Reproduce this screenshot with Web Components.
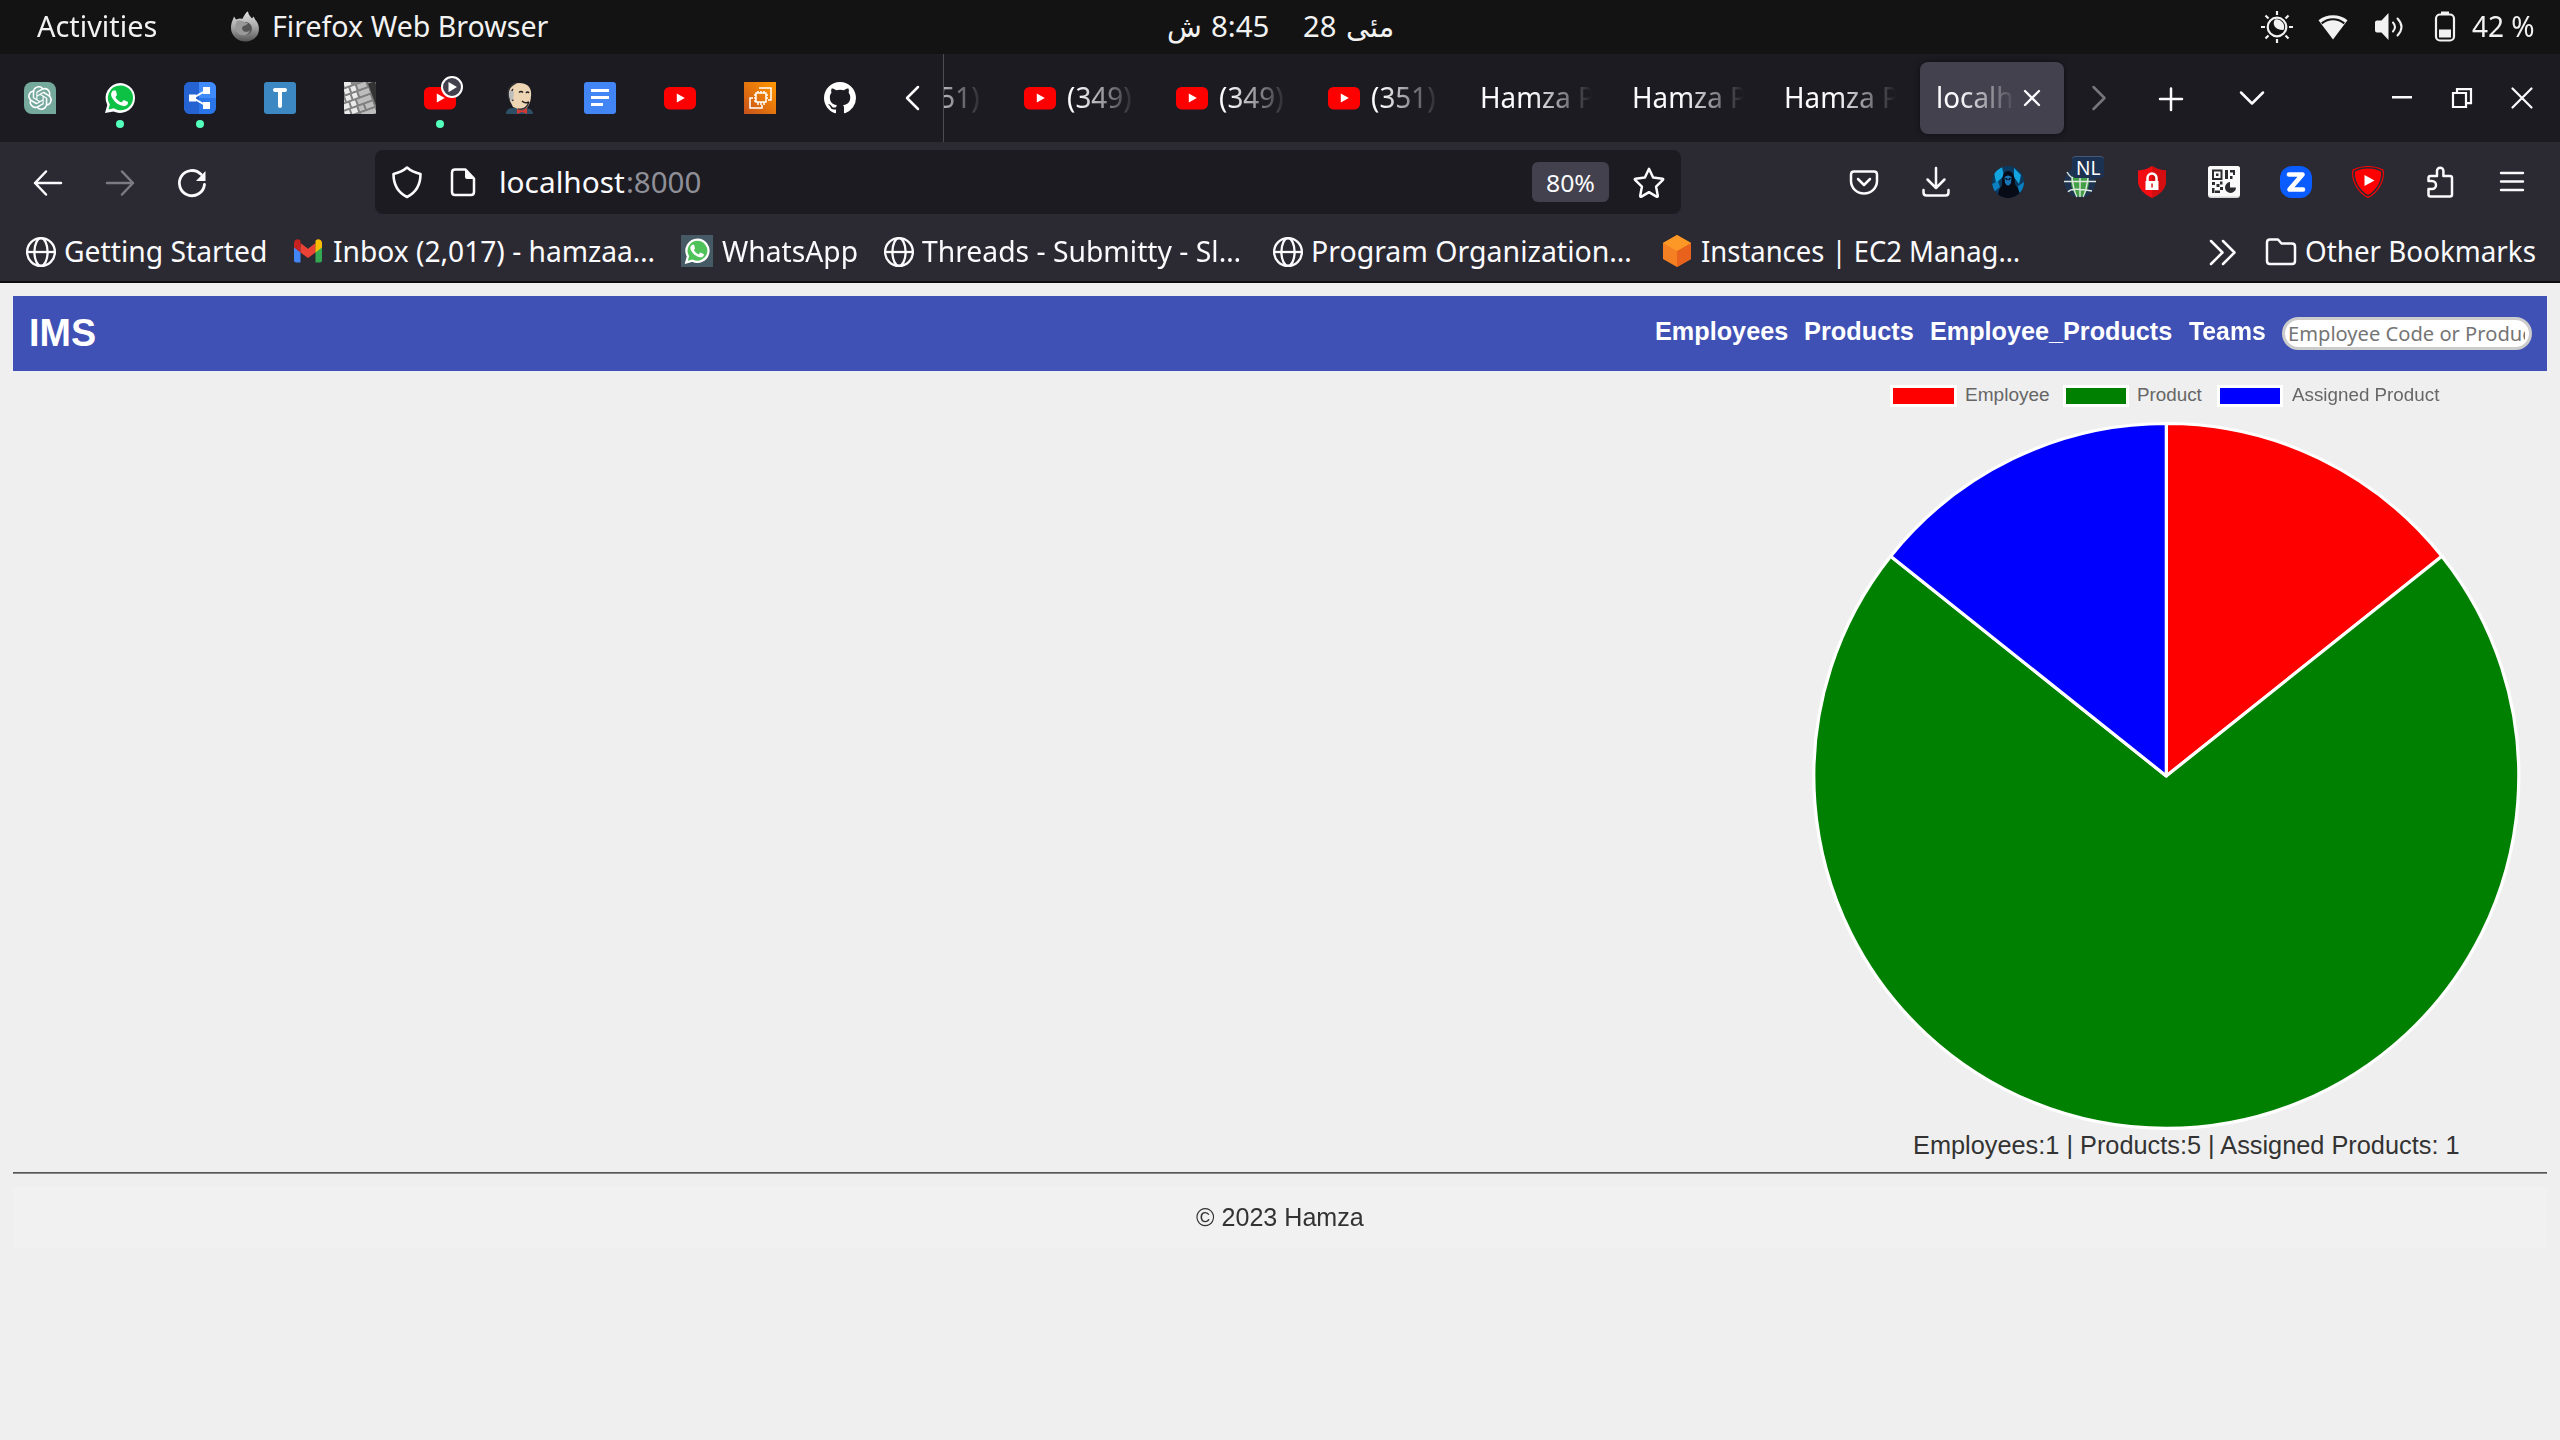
<!DOCTYPE html>
<html lang="en">
<head>
<meta charset="utf-8">
<title>IMS</title>
<style>
html,body{margin:0;height:100%;background:#efefef;overflow:hidden}
</style>
</head>
<body>
<desktop-screen></desktop-screen>
<script>
const globe='<g fill="none" stroke="#fbfbfe" stroke-width="2.3"><circle cx="16" cy="17" r="13.9"/><ellipse cx="16" cy="17" rx="6.6" ry="13.9"/><path d="M2 17h28"/></g>';
const yt='<rect y="5" width="32" height="22.4" rx="5.5" fill="#f00"/><path d="M12.8 11.6v9l8-4.5z" fill="#fff"/>';
const wa='M16.4 2A13.9 13.9 0 0 0 4.3 22.8L2.2 30.4l7.8-2A13.9 13.9 0 1 0 16.4 2z';
const phone='M11.3 8.3c-.4-.8-.8-.8-1.2-.8h-.9c-.4 0-1 .1-1.4.6-.5.5-1.5 1.5-1.5 3.400 0 2 1.500 4 1.700 4.300.2.3 2.900 4.600 7.100 6.300 3.500 1.300 4.200 1 5 1 .8-.1 2.400-1 2.800-2 .3-1 .3-1.800.2-2-.1-.1-.400-.3-.9-.500s-2.400-1.200-2.800-1.300c-.4-.200-.7-.200-1 .200l-1.200 1.600c-.2.3-.500.300-.9.1-.400-.2-1.700-.6-3.200-2-1.200-1.100-2-2.400-2.200-2.800-.2-.4 0-.7.2-.900l.900-1.200c.2-.2.1-.500 0-.700z';
const ln=(d,w=2.5,c='#fbfbfe')=>`<path d="${d}" fill="none" stroke="${c}" stroke-width="${w}" stroke-linecap="round" stroke-linejoin="round"/>`;
const ICONS={
firefox:`<defs><linearGradient id="a" x2="0" y2="1"><stop stop-color="#e2e2e2"/><stop offset=".5" stop-color="#aaa"/><stop offset="1" stop-color="#555"/></linearGradient></defs><path d="M3.500 9.500 5 5.600l2 3 3.500-1 3 .200C15 5 16.500 1.500 19 .3c.3 3.200 2 5 4 7.200l1.500-2 2 3.500c3 3.500 3.900 7 3.200 11.500C28.500 26.500 23 30.500 16.500 30.500 8.500 30.500 2 24.500 2 17c0-3 .5-5.500 1.500-7.500z" fill="url(#a)"/><circle cx="16.500" cy="17.500" r="6.500" fill="#555"/><path d="M8 10c3-1 6 0 8 1.500l3 .5c-1 2-3 2-4.500 3-2 1-2 3.500 0 5s5 1 6.500-1c-1 5-6 6.500-10 4.500-5-2.500-6-8-3-13.500z" fill="#999"/>`,
sun:`<g fill="none" stroke="#f2f2f2" stroke-width="2.200"><circle cx="16" cy="16" r="9.300"/><path d="M16 0v4M16 28v4M0 16h4M28 16h4M4.500 4.500l3 3M24.500 24.500l3 3M4.500 27.500l3-3M24.500 7.500l3-3"/></g><path d="M14 8.500c-3 4-1 10.500 8.500 10.500a7.600 7.600 0 0 0-8.500-10.500z" fill="#f2f2f2"/>`,
wifi:`<path d="M1.500 9.300C9.500 2.600 22.500 2.600 30.500 9.300L16 28.500z" fill="#f2f2f2"/><path d="M4.700 12.400C11.500 7 20.500 7 27.300 12.400" fill="none" stroke="#131313" stroke-width="2"/>`,
speaker:`<path d="M2 11.500q0-2 2-2h4.500L15.500 2v27L8.500 21.500H4q-2 0-2-2z" fill="#f2f2f2"/>${ln('M20 11.500q4 4.500 0 9M24.500 7.500q8 8.500 0 17',2,'#f2f2f2')}`,
battery:`<rect x="7" y="3.500" width="18" height="26" rx="4" fill="none" stroke="#f2f2f2" stroke-width="2.200"/><path d="M12 .500h8v2.500h-8zM10 18.500h12v8H10z" fill="#f2f2f2"/>`,
gpt:`<path d="M8 0h16a8 8 0 0 1 8 8v24H8a8 8 0 0 1-8-8V8a8 8 0 0 1 8-8z" fill="#75a99c"/><g transform="translate(4 4)" fill="#fff"><path d="M22.2819 9.8211a5.9847 5.9847 0 0 0-.5157-4.9108 6.0462 6.0462 0 0 0-6.5098-2.9A6.0651 6.0651 0 0 0 4.9807 4.1818a5.9847 5.9847 0 0 0-3.9977 2.9 6.0462 6.0462 0 0 0 .7427 7.0966 5.98 5.98 0 0 0 .511 4.9107 6.051 6.051 0 0 0 6.5146 2.9001A5.9847 5.9847 0 0 0 13.2599 24a6.0557 6.0557 0 0 0 5.7718-4.2058 5.9894 5.9894 0 0 0 3.9977-2.9001 6.0557 6.0557 0 0 0-.7475-7.073zm-9.022 12.6081a4.4755 4.4755 0 0 1-2.8764-1.0408l.1419-.0804 4.7783-2.7582a.7948.7948 0 0 0 .3927-.6813v-6.7369l2.02 1.1686a.071.071 0 0 1 .038.052v5.5826a4.504 4.504 0 0 1-4.4945 4.4944zm-9.6607-4.1254a4.4708 4.4708 0 0 1-.5346-3.0137l.142.0852 4.783 2.7582a.7712.7712 0 0 0 .7806 0l5.8428-3.3685v2.3324a.0804.0804 0 0 1-.0332.0615L9.74 19.9502a4.4992 4.4992 0 0 1-6.1408-1.6464zM2.3408 7.8956a4.485 4.485 0 0 1 2.3655-1.9728V11.6a.7664.7664 0 0 0 .3879.6765l5.8144 3.3543-2.0201 1.1685a.0757.0757 0 0 1-.071 0l-4.8303-2.7865A4.504 4.504 0 0 1 2.3408 7.872zm16.5963 3.8558L13.1038 8.364 15.1192 7.2a.0757.0757 0 0 1 .071 0l4.8303 2.7913a4.4944 4.4944 0 0 1-.6765 8.1042v-5.6772a.79.79 0 0 0-.407-.667zm2.0107-3.0231l-.142-.0852-4.7735-2.7818a.7759.7759 0 0 0-.7854 0L9.409 9.2297V6.8974a.0662.0662 0 0 1 .0284-.0615l4.8303-2.7866a4.4992 4.4992 0 0 1 6.6802 4.66zM8.3065 12.863l-2.02-1.1638a.0804.0804 0 0 1-.038-.0567V6.0742a4.4992 4.4992 0 0 1 7.3757-3.4537l-.142.0805L8.704 5.459a.7948.7948 0 0 0-.3927.6813zm1.0976-2.3654l2.602-1.4998 2.6069 1.4998v2.9994l-2.5974 1.4997-2.6067-1.4997Z"/></g>`,
wa:`<path d="M16.400 1A15 15 0 0 0 3.300 23L1 31l8.500-1.500A15 15 0 1 0 16.400 1z" fill="#fff"/><path d="M16.300 3.500A12.400 12.400 0 0 0 5.800 22.500L4.500 27.500l5.300-1.300A12.400 12.400 0 1 0 16.300 3.500z" fill="#0cc143"/><path d="${phone}" transform="translate(.8 1)" fill="#fff"/>`,
waold:`<rect width="32" height="32" fill="#455a64"/><g transform="translate(3.500 3) scale(.8)"><path d="${wa}" fill="#4fc35a" stroke="#fff" stroke-width="2.800"/><path d="${phone}" transform="translate(1 1)" fill="#fff"/></g>`,
share:`<rect width="32" height="32" rx="6" fill="#2a75e8"/><path d="M6 0h9v32H6a6 6 0 0 1-6-6V6a6 6 0 0 1 6-6z" fill="#2563d2"/><path d="M15 0h11a6 6 0 0 1 6 6v10H15z" fill="#3f8bfc"/><path d="M22 8.500 9 16l13 7.500" stroke="#fff" stroke-width="2" fill="none"/><path d="M5 12.500h7v7H5zM19 5h7v7h-7zM19 20h7v7h-7z" fill="#fff"/>`,
tlogo:`<rect width="32" height="32" rx="3" fill="#3b88c3"/>${ln('M11 8h10M16 8v16',4,'#fff')}`,
keys:`<clipPath id="k"><path d="M0 0h32v32H0z"/></clipPath><g clip-path="url(#k)"><path d="M0 0h32v32H0z" fill="#8c8c8c"/><g transform="rotate(-20 16 16)" stroke="#777" stroke-width=".8" fill="#ebebeb"><path d="M-4-5h8v6h-8zM5-5h8v6H5zM-4 2h6v6h-6zM3 2h6v6H3zM10 2h6v6h-6zM-4 9h5v6h-5zM2 9h6v6H2zM9 9h6v6H9zM-4 16h8v6h-8zM5 16h6v6H5zM-4 23h6v6h-6zM3 23h7v6H3zM-2 30h12v6H-2z"/><path fill="#bdbdbd" d="M17 2h10v6H17zM16 9h12v6H16zM12 16h15v6H12zM11 23h6v6h-6zM18 23h9v6h-9zM11 30h16v6H11z"/><path d="M28-6h8v44h-8z" fill="#333"/><path d="M29-1h7v6h-7z"/></g></g>`,
yt,
ytplay:yt+`<circle cx="28" cy="5" r="10" fill="#42414d" stroke="#fff" stroke-width="2"/><path d="M24.500 0v10.200l8.500-5.100z" fill="#fff"/>`,
jenkins:`<path d="M2 32c0-4 2-6 8-6l8-1 8 2c2 1 3 3 3 5z" fill="#2d5066"/><path d="M9 25l-4-8C3 8 7 1 15 1c9 0 13 5 12 13-.300 6-2 9-4 12l-6 2z" fill="#eed5b4"/><path d="M6 18C2 10 5 4 12 1M9 7c-3 3-2 7 0 12M14 27c5 1 9-1 11-7" fill="none" stroke="#333" stroke-width="1.500"/><path d="M6 8c-2 4-1 8 1 12l2-3 1-7z" fill="#bdbdbd"/><path d="M15 10.500q2-2 4 0M22 11q1.500-2 3 0M18 19q3 3 7 1" fill="none" stroke="#222" stroke-width="1.500"/><path d="M13 27l5 1.500 5-2.500v6l-5-2-5 2z" fill="#d33833"/>`,
docs:`<rect width="32" height="32" rx="3" fill="#4285f4"/><path d="M7 7h18v3H7zM7 14h18v3H7zM7 21h12v3H7z" fill="#fff"/>`,
ec2:`<defs><linearGradient id="e" x1="0" y1="1" x2="1" y2="0"><stop stop-color="#c8511b"/><stop offset="1" stop-color="#f90"/></linearGradient></defs><path fill="url(#e)" d="M0 0h32v32H0z"/><g fill="none" stroke="#fff" stroke-width="1.500"><rect x="12" y="11" width="10" height="9"/><path d="M15 6h12v12h-3M9 16H6v10h12v-3M14 9v2M17 9v2M20 9v2M14 20v3M17 20v3M20 20v3M10 13h2M10 16h2M10 19h2M22 13h2M22 16h2"/></g>`,
github:`<path transform="scale(2)" fill="#fff" d="M8 0C3.58 0 0 3.58 0 8c0 3.54 2.29 6.53 5.47 7.59.4.07.55-.17.55-.38 0-.19-.01-.82-.01-1.49-2.01.37-2.53-.49-2.69-.94-.09-.23-.48-.94-.82-1.13-.28-.15-.68-.52-.01-.53.63-.01 1.08.58 1.23.82.72 1.21 1.87.87 2.33.66.07-.52.28-.87.51-1.07-1.78-.2-3.64-.89-3.64-3.95 0-.87.31-1.59.82-2.15-.08-.2-.36-1.02.08-2.12 0 0 .67-.21 2.2.82.64-.18 1.32-.27 2-.27s1.36.09 2 .27c1.53-1.04 2.2-.82 2.2-.82.44 1.1.16 1.92.08 2.12.51.56.82 1.27.82 2.15 0 3.07-1.87 3.75-3.65 3.95.29.25.54.73.54 1.48 0 1.07-.01 1.93-.01 2.2 0 .21.15.46.55.38A8.01 8.01 0 0 0 16 8c0-4.42-3.58-8-8-8Z"/>`,
prev:ln('M22 5 11 16l11 11'),
next:ln('M10.500 5l11 11-11 11',2.5,'#75757b'),
plus:ln('M16 6.500v21.500M5 17h22'),
down:ln('M5 10.500l11 11 11-11'),
min:'<path d="M6 14h20v2.500H6z" fill="#fbfbfe"/>',
restore:'<g fill="none" stroke="#fbfbfe" stroke-width="2.200"><path d="M7 11h13v14H7z"/><path d="M11 11V7.200h14v14h-5"/></g>',
close:ln('M6.500 6.500l19 19M25.500 6.500l-19 19',2.200),
x:ln('M1 1l14 14M15 1 1 15',2.300),
back:ln('M29 17H3M14 5.500 3 17l11 11.500'),
fwd:ln('M3 17h26M18 5.500 29 17 18 28.500',2.5,'#7c7b82'),
reload:`${ln('M28.500 18.500A12.600 12.600 0 1 1 25 8.300',2.800)}<path d="M29.500 5v9.500q0 .5-.5.500h-9z" fill="#fbfbfe"/>`,
shield:ln('M16 1.500q-5 4.500-13.500 6.500c0 10 3.500 18 13.500 23 10-5 13.500-13 13.500-23Q21 6 16 1.500z',2.600),
page:`${ln('M8 3.500h10.500l8.500 9V26q0 3-3 3H8q-3 0-3-3V6.500q0-3 3-3z',2.500)}<path d="M18 3v8q0 2 2 2h8z" fill="#fbfbfe"/>`,
star:ln('M16 2.800l4.100 8.700 9.300 1.200q1.500.4.300 1.500l-6.600 6.500 1.700 9q0 1.500-1.300.9L16 26.200l-7.500 4.400q-1.300.6-1.300-.9l1.700-9-6.600-6.500q-1.200-1.100.3-1.500l9.300-1.200z',2.500),
pocket:ln('M6 5.500h20q3 0 3 3V15a13 12.500 0 0 1-26 0V8.500q0-3 3-3zM10 13l6 6 6-6',2.500),
dl:ln('M16 2v19M7.500 13.500 16 22l8.500-8.500M3.500 24v2.500q0 3 3 3h19q3 0 3-3V24',2.500),
avatar:`<clipPath id="v"><circle cx="16" cy="16" r="16"/></clipPath><g clip-path="url(#v)"><path d="M0 0h32v32H0z" fill="#0b3a5e"/><path d="M2 6l8-5 2 9-8 7zM22 2l7 7-2 9-5-7z" fill="#12a5e0"/><path d="M0 18l6-3 2 6-6 5zM26 20l6-4v8l-5 3z" fill="#0b7fc0"/><path d="M6 32c0-8 2-9 4-13 0-8 1-14 6-14s7 6 7 13c2 4 5 6 5 14z" fill="#070b16"/><path d="M12.500 11q3.500-3 7 0l-.500 6q-3 5-6 0z" fill="#1876b8"/><path d="M13.500 12l2 2M18.500 12l-2 2" stroke="#061020" stroke-width="1.500"/></g>`,
vpn:`<circle cx="16" cy="16" r="15.500" fill="#1e3350"/><path d="M16 6c6 0 9 4 9 10s-4 15-9 15-9-9-9-15 3-10 9-10z" fill="#43a047"/><path d="M16 2v29M0 15.500h32M3 6q3 5 6 6M4 26q3-5 24-1M8 12q2 14 5 19M24 12q-2 14-5 19" fill="none" stroke="#dfe8e0" stroke-width="1.400"/>`,
lock:`<path d="M16 0q6 4 14 4.500v12Q29 26 16 32 3 26 2 16.500v-12Q10 4 16 0z" fill="#f30d12"/><path d="M16 0q6 4 14 4.500v12Q29 26 16 32z" fill="#d30d10"/><path d="M9.500 15h13v9h-13z" fill="#fff"/><path d="M11.500 16v-4a4.500 4.500 0 0 1 9 0v4" fill="none" stroke="#fff" stroke-width="2.500"/><path d="M15.200 17.500h1.700v4h-1.700z" fill="#d33"/>`,
qr:`<rect width="32" height="32" rx="3" fill="#d5d5d5"/><rect width="32" height="30.500" rx="3" fill="#fafafa"/><g fill="#2b2a2e"><path d="M4 3.500h10.500v10.500H4zM6 5.500v6.500h6.500V5.500z" fill-rule="evenodd"/><path d="M8 7.500h2.500v2.500H8zM17 4h3v9h-3zM22 4h5v5h-2V6.500h-3zM22 10h2.500v3H22zM4 16h3v3H4zM8.500 18h3v3h-3zM12 15.500h2.500v3H12zM4 22h2.500v5H4zM7 24.500h5V27H7zM12 21h3v3h-3z"/><path d="M22 16v5.500h6a5.500 5.500 0 1 1-6-5.500z"/></g>`,
zoom:`<rect width="32" height="32" rx="12" fill="#0b5cff"/>${ln('M9 8.500h13.500L9.500 23.500H23',4.600,'#fff')}`,
ytshield:`<path d="M16 .500C21 .500 27 2 31 4c2 9-4 22-15 27.500C5 26-1 13 1 4 5 2 11 .500 16 .500z" fill="none" stroke="#f00" stroke-width="1.200"/><path d="M16 2.500c5 0 9 1 13 3 1 8-4 18.500-13 23.500C7 24 2 13.500 3 5.500c4-2 8-3 13-3z" fill="#f00"/><path d="M12.500 9v11l10-5.500z" fill="#fff"/>`,
ext:ln('M6.500 30.500q-2 0-2-2V23h3.500a4 4 0 0 0 0-8H4.500v-3q0-2 2-2H13V5a3.200 3.200 0 0 1 6.400 0v5H26q2 0 2 2v16.500q0 2-2 2z',2.500),
menu:ln('M5 7h22M5 15.500h22M5 24h22',2.400),
globe,
gmail:`<path d="M2 9v16q0 2.500 2.500 2.500H8.500V12z" fill="#4285f4"/><path d="M30 9v16q0 2.500-2.500 2.500H23.500V12z" fill="#34a853"/><path d="M8.500 8v9.500L16 23l7.500-5.500V8L16 13.700z" fill="#ea4335"/><path d="M2 9.500V8c0-3 3.500-5 6-3l.5 1v11.500L2 12.500z" fill="#c5221f"/><path d="M30 9.500V8c0-3-3.500-5-6-3l-.5 1v11.500l6.500-5z" fill="#fbbc04"/>`,
cube:`<path d="M16 0l14 8v16l-14 8-14-8V8z" fill="#f58024"/><path d="M16 15.500 30 8v16l-14 8z" fill="#e8621d"/><path d="M16 0l14 8-14 8L2 8z" fill="#fd9827"/>`,
more:ln('M4 5l11.500 11.500L4 28M16 5l11.500 11.500L16 28',2.5),
folder:ln('M5 4.500h8l3.500 4H27q3 0 3 3V26q0 3-3 3H5q-3 0-3-3V7.500q0-3 3-3z',2.500)
};

function define(name,css,html,after){
  const t=document.createElement('template');
  t.innerHTML=`<style>:host{box-sizing:border-box}*{box-sizing:border-box}${css}</style>${html}`;
  customElements.define(name,class extends HTMLElement{
    connectedCallback(){
      if(this.shadowRoot)return;
      this.attachShadow({mode:'open'}).appendChild(t.content.cloneNode(true));
      if(after)after(this,this.shadowRoot);
    }
  });
}

define('ui-icon',':host{display:block;width:32px;height:32px;flex:none}:host([size="16"]){width:16px;height:16px}svg{display:block;overflow:visible}','<div></div>',(el,root)=>{
  const s=el.getAttribute('size')||32;
  root.querySelector('div').innerHTML=`<svg width="${s}" height="${s}" viewBox="0 0 ${s} ${s}">${ICONS[el.getAttribute('name')]}</svg>`;
});

/* Text whose inked extent fills exactly the width given in the w attribute. */
const pen=document.createElement('canvas').getContext('2d');
define('fit-text',':host{display:block;flex:none;white-space:pre;line-height:1.3}span{display:inline-block;transform-origin:0 50%}','<span><slot></slot></span>',(el,root)=>{
  const w=+el.getAttribute('w'),cs=getComputedStyle(el),s=root.querySelector('span');
  pen.font=`${cs.fontWeight} ${cs.fontSize} ${cs.fontFamily}`;
  const m=pen.measureText(el.textContent),l=-m.actualBoundingBoxLeft,k=w/(m.actualBoundingBoxRight+m.actualBoundingBoxLeft);
  el.style.width=w+'px';
  s.style.transform=`translateX(${(l*-k).toFixed(2)}px) scaleX(${k.toFixed(4)})`;
  if(el.hasAttribute('rtl'))s.dir='rtl';
});

define('top-bar',`:host{display:grid;grid-template-columns:1fr auto 1fr;align-items:center;height:54px;background:#131313;color:#f2f2f2}
div{display:flex;align-items:center}.l{padding-left:36.500px}.r{justify-content:flex-end;padding-right:26px;gap:24px}.r fit-text{margin-left:-13px}`,
`<div class="l"><fit-text w="119.600">Activities</fit-text><ui-icon name="firefox" style="margin:0 13px 0 73px"></ui-icon><fit-text w="274.600">Firefox Web Browser</fit-text></div>
<div><fit-text w="32" rtl>ش</fit-text><fit-text w="56" style="margin-left:12px">8:45</fit-text><fit-text w="31" style="margin-left:36px">28</fit-text><fit-text w="45" rtl style="margin-left:12px">مئی</fit-text></div>
<div class="r"><ui-icon name="sun"></ui-icon><ui-icon name="wifi"></ui-icon><ui-icon name="speaker"></ui-icon><ui-icon name="battery"></ui-icon><fit-text w="62">42 %</fit-text></div>`);

define('pinned-tab',':host{display:flex;flex:none;width:80px;height:88px;align-items:center;justify-content:center;position:relative}i{position:absolute;left:36px;top:66px;width:8px;height:8px;border-radius:50%;background:#54ffbd;display:none}:host([dot]) i{display:block}','<slot></slot><i></i>');
define('browser-tab',`:host{display:flex;flex:none;width:152px;height:88px;align-items:center;padding:0 4px}
.b{display:flex;align-items:center;width:144px;height:72px;padding:0 16px;border-radius:8px}
:host([active]) .b{background:#42414d;box-shadow:0 0 5px #0008}
.t{flex:1;min-width:0;overflow:hidden;-webkit-mask-image:linear-gradient(to left,transparent,#000 58px);mask-image:linear-gradient(to left,transparent,#000 58px)}
:host([active]) .t{-webkit-mask-image:linear-gradient(to left,transparent 4px,#000 60px);mask-image:linear-gradient(to left,transparent 4px,#000 60px)}
::slotted(ui-icon[name=yt]){margin-right:12px}::slotted(ui-icon[name=x]){margin-left:4px;margin-right:8px}`,
'<div class="b"><slot name="icon"></slot><div class="t"><slot></slot></div><slot name="end"></slot></div>');

const yTab=n=>`<browser-tab><ui-icon slot="icon" name="yt"></ui-icon><fit-text w="63">(${n})</fit-text></browser-tab>`;
const hTab='<browser-tab><fit-text w="111.500" style="margin-left:1.500px">Hamza P</fit-text></browser-tab>';
define('tab-strip',`:host{display:flex;height:88px;background:#1c1b22;padding-right:8px}
.c{display:flex;align-items:center;justify-content:center;flex:none}.tabs{display:flex;width:1125px;border-left:1px solid #4c4c52;overflow:hidden}.tabs>:first-child{margin-left:-92px}.s{flex:1}`,
['gpt','wa*','share*','tlogo','keys','ytplay*','jenkins','docs','yt','ec2','github'].map(n=>`<pinned-tab${n.endsWith('*')?' dot':''}><ui-icon name="${n.replace('*','')}"></ui-icon></pinned-tab>`).join('')+
`<div class="c" style="width:63px"><ui-icon name="prev"></ui-icon></div><div class="tabs">${yTab(351)}${yTab(349)}${yTab(349)}${yTab(351)}${hTab}${hTab}${hTab}<browser-tab active><fit-text w="91" style="margin-left:1.500px">localho</fit-text><ui-icon slot="end" name="x" size="16"></ui-icon></browser-tab></div>
<div class="c" style="width:62px"><ui-icon name="next"></ui-icon></div><div class="c" style="width:82px"><ui-icon name="plus"></ui-icon></div><div class="c" style="width:80px"><ui-icon name="down"></ui-icon></div><div class="s"></div>
<div class="c" style="width:60px"><ui-icon name="min"></ui-icon></div><div class="c" style="width:60px"><ui-icon name="restore"></ui-icon></div><div class="c" style="width:60px"><ui-icon name="close"></ui-icon></div>`);

define('url-bar',`:host{display:flex;align-items:center;width:1306px;height:64px;border-radius:8px;background:#1c1b22;padding:0 16px}
fit-text{position:relative;top:.5px}.z{margin-left:auto;margin-right:24px;width:77px;height:40px;border-radius:6px;background:#42414d;display:flex;align-items:center;justify-content:center;font-size:24px}`,
`<ui-icon name="shield"></ui-icon><ui-icon name="page" style="margin:0 22px 0 24px"></ui-icon><fit-text w="123.500">localhost</fit-text><fit-text w="72" style="margin-left:3px;color:#8f8f97">:8000</fit-text><div class="z"><fit-text w="47">80%</fit-text></div><ui-icon name="star"></ui-icon>`);

define('nav-bar',`:host{display:flex;align-items:center;height:80px;background:#2b2a33;padding:0 32px}.g{display:flex;gap:40px}url-bar{margin-left:167px}.e{margin-left:auto}
.v{position:relative}.v b{position:absolute;left:8px;top:-10px;width:32px;height:22px;border-radius:4px;background:#1c3253;border-top:1px solid #46597a;display:flex;align-items:center;justify-content:center;font:400 20px "Noto Sans",sans-serif;color:#fff}`,
`<div class="g"><ui-icon name="back"></ui-icon><ui-icon name="fwd"></ui-icon><ui-icon name="reload"></ui-icon></div><url-bar></url-bar>
<div class="g e">${['pocket','dl','avatar'].map(n=>`<ui-icon name="${n}"></ui-icon>`).join('')}<div class="v"><ui-icon name="vpn"></ui-icon><b><fit-text w="23">NL</fit-text></b></div>${['lock','qr','zoom','ytshield','ext','menu'].map(n=>`<ui-icon name="${n}"></ui-icon>`).join('')}</div>`);

define('book-mark',':host{display:flex;align-items:center;flex:none}.x{margin-left:var(--g,8.500px)}','<slot name="icon"></slot><div class="x"><slot></slot></div>');
const bm=(icon,w,text,ml,g)=>`<book-mark style="margin-left:${ml};--g:${g}px"><ui-icon slot="icon" name="${icon}"></ui-icon><fit-text w="${w}">${text}</fit-text></book-mark>`;
define('bookmarks-bar',':host{display:flex;align-items:center;height:61px;background:#2b2a33;border-bottom:2px solid #0c0c0d;padding:0 25px}',
bm('globe',200.8,'Getting Started','0',8.3)+bm('gmail',319.6,'Inbox (2,017) - hamzaa…','26px',9.8)+bm('waold',134.5,'WhatsApp','27.500px',9.5)+bm('globe',317.5,'Threads - Submitty - Sl…','26px',7.5)+bm('globe',317.3,'Program Organization…','32px',8.7)+bm('cube',316.6,'Instances | EC2 Manag…','31px',8.6)+
'<ui-icon name="more" style="margin-left:auto"></ui-icon>'+bm('folder',229.3,'Other Bookmarks','26px',8.7));

define('search-box',':host{display:flex;align-items:center;width:250px;height:33px;border:3px solid #ccc;border-radius:17px;background:#fff;padding-left:4px;font:400 20.500px "Noto Sans",sans-serif;color:#757575}div{width:236px;overflow:hidden}','<div><fit-text w="243">Employee Code or Produc</fit-text></div>');
define('site-header',`:host{display:flex;align-items:center;height:75px;background:#3f51b5;color:#fff;padding:0 15px 0 17.500px;font-weight:700}
.logo{font-size:38.400px;padding-bottom:2px}nav{display:flex;margin-left:auto;margin-right:17px;gap:17px;padding-bottom:3px}`,
`<fit-text class="logo" w="64.500">IMS</fit-text><nav><fit-text w="132">Employees</fit-text><fit-text w="108.500">Products</fit-text><fit-text w="241">Employee_Products</fit-text><fit-text w="76.500">Teams</fit-text></nav><search-box></search-box>`);

define('legend-item',':host{display:flex;align-items:center;height:22px;color:#666;font-size:19.200px}i{width:66.500px;height:22px;border:3px solid #fff;background:var(--c);margin-right:9px}div{margin-top:-1.500px}','<i></i><div><slot></slot></div>');
define('pie-chart',`:host{display:flex;flex-direction:column;align-items:center;width:760px;padding-top:14px}.l{display:flex;gap:14px;margin-right:4px}svg{display:block;margin-top:13px}`,
`<div class="l"><legend-item style="--c:#f00"><fit-text w="83">Employee</fit-text></legend-item><legend-item style="--c:#008000"><fit-text w="64.500">Product</fit-text></legend-item><legend-item style="--c:#00f"><fit-text w="148">Assigned Product</fit-text></legend-item></div>
<svg width="760" height="712" viewBox="0 0 760 712"><g stroke="#fff" stroke-width="3.200" stroke-linejoin="round"><path fill="#f00" d="M379.300 356V3.500A352.500 352.500 0 0 1 654.900 136.200z"/><path fill="#008000" d="M379.300 356 654.900 136.200A352.500 352.500 0 1 1 103.700 136.200z"/><path fill="#00f" d="M379.300 356 103.700 136.200A352.500 352.500 0 0 1 379.300 3.500z"/></g></svg>`);

define('site-page',`:host{display:block;padding:13px;background:#efefef;font:400 25.600px "Liberation Sans",Arial,sans-serif;color:#333}
.row{display:flex;justify-content:flex-end}.stats{display:flex;justify-content:flex-end;height:26px;align-items:center;padding:2px 87px 0 0}
hr{margin:14px 0 13px;border:0;height:2px;background:linear-gradient(#555 50%,#868686 50%)}footer{height:61px;display:flex;align-items:center;justify-content:center;background:#f1f1f1}`,
`<site-header></site-header><div class="row"><pie-chart></pie-chart></div><div class="stats"><fit-text w="544.700">Employees:1 | Products:5 | Assigned Products: 1</fit-text></div><hr><footer><fit-text w="168.500">© 2023 Hamza</fit-text></footer>`);

define('desktop-screen',':host{display:flex;flex-direction:column;width:2560px;height:1440px;font:400 28.500px "Noto Sans","DejaVu Sans",sans-serif;color:#fbfbfe;overflow:hidden}site-page{flex:1}',
'<top-bar></top-bar><tab-strip></tab-strip><nav-bar></nav-bar><bookmarks-bar></bookmarks-bar><site-page></site-page>');
</script>
</body>
</html>
